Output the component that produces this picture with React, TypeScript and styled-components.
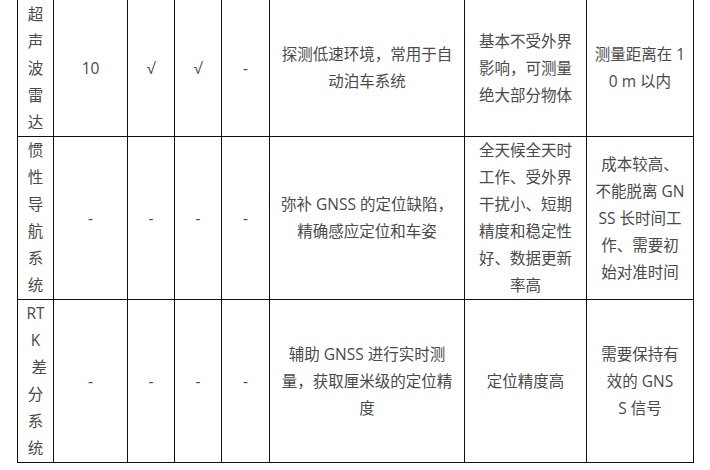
import React from 'react';
import styled, { createGlobalStyle } from 'styled-components';

const Global = createGlobalStyle`
  html, body {
    margin: 0;
    padding: 0;
    background: #ffffff;
  }
`;

const Page = styled.div`
  padding-left: 17px;
  font-family: "Open Sans", "Noto Sans CJK SC", sans-serif;
`;

const Table = styled.table`
  margin-top: -1px;
  width: 677px;
  table-layout: fixed;
  border-collapse: separate;
  border-spacing: 1px;
  background: #111111;
`;

const Col = styled.col<{ $w: number }>`
  width: ${(p) => p.$w}px;
`;

const Cell = styled.td<{ $h: number }>`
  height: ${(p) => p.$h}px;
  padding: 0;
  background: #ffffff;
  color: #4a4a4a;
  font-size: 15.5px;
  line-height: 27px;
  text-align: center;
  vertical-align: middle;
`;

const Line = styled.span`
  display: block;
  white-space: nowrap;
`;

const widths = [35, 73, 46, 46, 47, 194, 121, 106];

type Row = { h: number; cells: string[][] };

const rows: Row[] = [
  {
    h: 136,
    cells: [
      ['超', '声', '波', '雷', '达'],
      ['10'],
      ['√'],
      ['√'],
      ['-'],
      ['探测低速环境，常用于自', '动泊车系统'],
      ['基本不受外界', '影响，可测量', '绝大部分物体'],
      ['测量距离在 1', '0 m 以内'],
    ],
  },
  {
    h: 162,
    cells: [
      ['惯', '性', '导', '航', '系', '统'],
      ['-'],
      ['-'],
      ['-'],
      ['-'],
      ['弥补 GNSS 的定位缺陷，', '精确感应定位和车姿'],
      ['全天候全天时', '工作、受外界', '干扰小、短期', '精度和稳定性', '好、数据更新', '率高'],
      ['成本较高、', '不能脱离 GN', 'SS 长时间工', '作、需要初', '始对准时间'],
    ],
  },
  {
    h: 162,
    cells: [
      ['RT', 'K', '\u2002差', '分', '系', '统'],
      ['-'],
      ['-'],
      ['-'],
      ['-'],
      ['辅助 GNSS 进行实时测', '量，获取厘米级的定位精', '度'],
      ['定位精度高'],
      ['需要保持有', '效的 GNS', 'S 信号'],
    ],
  },
];

export default function App() {
  return (
    <>
      <Global />
      <Page>
        <Table>
          <colgroup>
            {widths.map((w, i) => (
              <Col key={i} $w={w} />
            ))}
          </colgroup>
          <tbody>
            {rows.map((row, r) => (
              <tr key={r}>
                {row.cells.map((lines, c) => (
                  <Cell key={c} $h={row.h}>
                    {lines.map((t, k) => (
                      <Line key={k}>{t}</Line>
                    ))}
                  </Cell>
                ))}
              </tr>
            ))}
          </tbody>
        </Table>
      </Page>
    </>
  );
}
